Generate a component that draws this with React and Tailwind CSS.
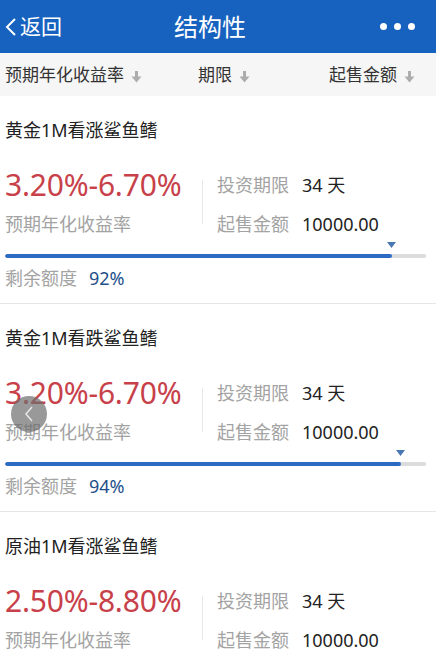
import React from "react";

const font = { fontFamily: "'Noto Sans', 'Noto Sans CJK SC', sans-serif" };

function DownArrow() {
  return (
    <svg width="11" height="13" viewBox="0 0 11 13" className="ml-[7px] mt-[3px]">
      <rect x="4" y="1" width="3" height="7" fill="#adadad" />
      <polygon points="0.5,6.5 10.5,6.5 5.5,12.5" fill="#adadad" />
    </svg>
  );
}

const products = [
  { name: "黄金1M看涨鲨鱼鳍", rate: "3.20%-6.70%", pct: 92 },
  { name: "黄金1M看跌鲨鱼鳍", rate: "3.20%-6.70%", pct: 94 },
  { name: "原油1M看涨鲨鱼鳍", rate: "2.50%-8.80%", pct: 90 },
];

function Card({ p }) {
  return (
    <div className="px-[5px] pt-[22px] pb-[13px] border-b border-[#e6e6e6] bg-white">
      <div className="text-[18px] leading-[24px] text-[#222]">{p.name}</div>
      <div className="mt-[25px] flex items-center">
        <div className="w-[197px]">
          <div className="text-[30px] leading-[36px] text-[#c8414a] tracking-[-0.2px]">{p.rate}</div>
          <div className="mt-[8px] text-[18px] leading-[26px] text-[#a3a3a3]">预期年化收益率</div>
        </div>
        <div className="w-px h-[44px] bg-[#e8e8e8]" />
        <div className="pl-[14px]">
          <div className="h-[36px] flex items-center text-[18px]">
            <span className="text-[#a3a3a3]">投资期限</span>
            <span className="ml-[13px] text-[#222]">34 天</span>
          </div>
          <div className="mt-[8px] h-[26px] flex items-center text-[18px]">
            <span className="text-[#a3a3a3]">起售金额</span>
            <span className="ml-[13px] text-[#222]">10000.00</span>
          </div>
        </div>
      </div>
      <div className="mt-[5px] pr-[5px]">
        <div className="h-[6px] relative">
          <svg
            width="9"
            height="6"
            viewBox="0 0 9 6"
            className="absolute top-0"
            style={{ left: `calc(${p.pct}% - 5px)` }}
          >
            <polygon points="0,0 9,0 4.5,6" fill="#4a78b4" />
          </svg>
        </div>
        <div className="mt-[6px] h-[4px] bg-[#dcdcdc] rounded-full overflow-hidden">
          <div className="h-full bg-[#2b6bc4] rounded-full" style={{ width: `${p.pct}%` }} />
        </div>
      </div>
      <div className="mt-[8px] h-[24px] flex items-center text-[18px]">
        <span className="text-[#a3a3a3]">剩余额度</span>
        <span className="ml-[12px] text-[#1e4f8a]">{p.pct}%</span>
      </div>
    </div>
  );
}

export default function App() {
  return (
    <div className="w-[436px] h-[655px] overflow-hidden bg-white relative" style={font}>
      <div className="h-[53px] bg-[#1762bf] flex items-center text-white">
        <div className="flex-1 flex items-center pl-[5px]">
          <svg width="12" height="18" viewBox="0 0 12 18">
            <polyline points="10,1 2,9 10,17" fill="none" stroke="white" strokeWidth="2" />
          </svg>
          <span className="ml-[3px] text-[21px] leading-none">返回</span>
        </div>
        <div className="text-[24px] leading-none">结构性</div>
        <div className="flex-1 flex items-center justify-end pr-[21px] gap-[7px]">
          <span className="w-[7px] h-[7px] rounded-full bg-white" />
          <span className="w-[7px] h-[7px] rounded-full bg-white" />
          <span className="w-[7px] h-[7px] rounded-full bg-white" />
        </div>
      </div>
      <div className="h-[43px] bg-[#f6f6f6] flex items-center px-[5px] text-[17px] text-[#333]">
        <div className="w-[193px] flex items-center">
          预期年化收益率
          <DownArrow />
        </div>
        <div className="w-[131px] flex items-center">
          期限
          <DownArrow />
        </div>
        <div className="flex items-center">
          起售金额
          <DownArrow />
        </div>
      </div>
      {products.map((p, i) => (
        <Card key={i} p={p} />
      ))}
      <div className="absolute left-[11px] top-[396px] w-[36px] h-[36px] rounded-full bg-[rgba(110,110,110,0.7)] flex items-center justify-center">
        <svg width="10" height="16" viewBox="0 0 10 16">
          <polyline points="8,1 2,8 8,15" fill="none" stroke="#e8e8e8" strokeWidth="1.5" />
        </svg>
      </div>
    </div>
  );
}
